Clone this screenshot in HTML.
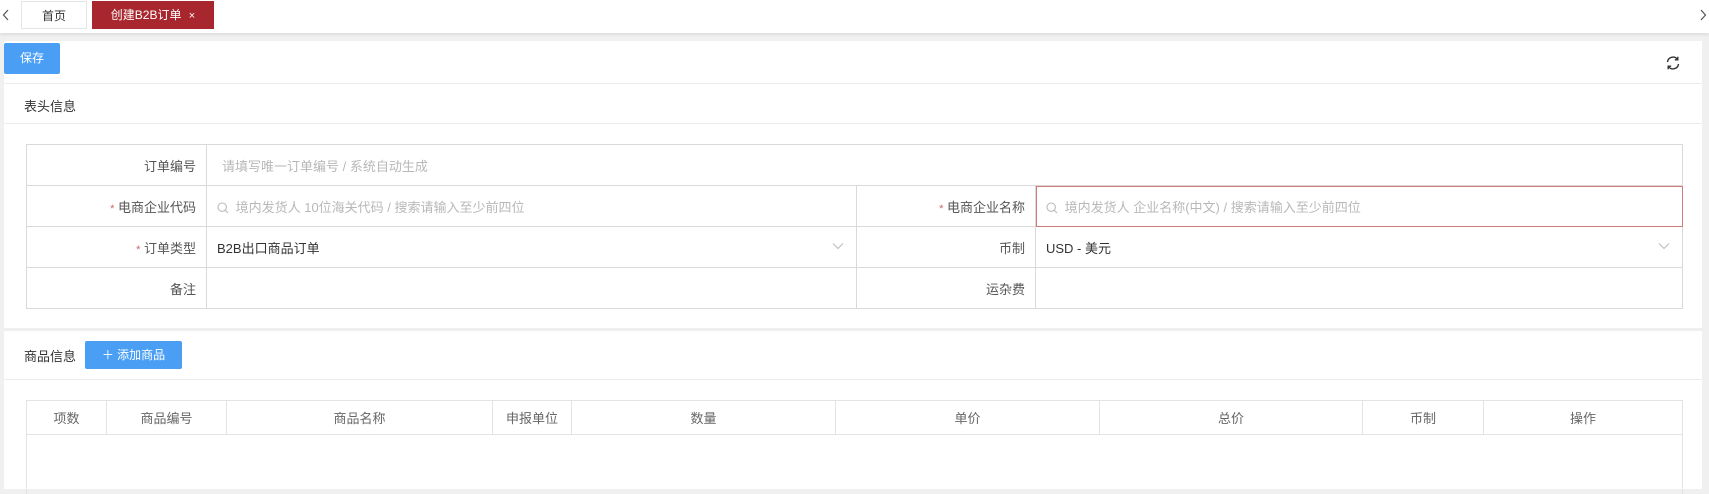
<!DOCTYPE html>
<html><head><meta charset="utf-8"><style>
*{box-sizing:border-box;margin:0;padding:0}
body{width:1709px;height:489px;overflow:hidden;background:#f0f0f0;font-family:"Liberation Sans","Noto Sans CJK SC",sans-serif;font-size:13px;color:#333;position:relative}
.abs{position:absolute}
.tabbar{left:0;top:0;width:1709px;height:33px;background:#fff;box-shadow:0 2px 3px rgba(0,0,0,.08)}
.tab{top:1px;height:28px;line-height:28px;text-align:center;font-size:12px}
.panel{left:4px;top:41px;width:1698px;height:448px;background:#fff}
.hl{position:absolute;left:4px;width:1698px;height:1px;background:#ececec}
table{border-collapse:collapse;position:absolute}
td{border:1px solid #d9d9d9;height:41px;padding:0 10px;position:relative}
td.l{text-align:right;color:#555}
.ph{color:#b8b8b8}
.star{color:#c66;font-size:11px}
.g td{height:34px;text-align:center;color:#666;background:#fff;border-color:#e3e3e3}
.chev{position:absolute;right:12px;top:15px}
.srch{vertical-align:-2px;margin-right:3px}
</style></head><body>
<div class="abs tabbar"></div>
<svg class="abs" style="left:2px;top:9px" width="8" height="12" viewBox="0 0 8 12" fill="none" stroke="#555" stroke-width="1.2"><path d="M6 1L1.5 6L6 11"/></svg>
<svg class="abs" style="left:1699px;top:9px" width="8" height="12" viewBox="0 0 8 12" fill="none" stroke="#555" stroke-width="1.2"><path d="M2 1L6.5 6L2 11"/></svg>
<div class="abs tab" style="left:21px;width:66px;border:1px solid #e5e5e5;color:#333">首页</div>
<div class="abs tab" style="left:92px;width:122px;background:#a8272e;color:#fff">创建B2B订单 <span style="font-size:11px;margin-left:4px">×</span></div>
<div class="abs panel"></div>
<div class="abs" style="left:4px;top:43px;width:56px;height:31px;background:#4a9ff5;color:#fff;font-size:12px;line-height:31px;text-align:center;border-radius:2px">保存</div>
<svg class="abs" style="left:1665px;top:55px" width="16" height="16" viewBox="0 0 16 16" fill="none" stroke="#333" stroke-width="1.4"><path d="M2.5 7A5.5 5.5 0 0 1 12.5 4.5"/><path d="M13.5 9A5.5 5.5 0 0 1 3.5 11.5"/><path d="M12.8 1.8v3h-3" /><path d="M3.2 14.2v-3h3"/></svg>
<div class="hl" style="top:83px"></div>
<div class="abs" style="left:24px;top:96px">表头信息</div>
<div class="hl" style="top:123px"></div>
<table style="left:26px;top:144px;width:1657px">
<tr><td class="l" style="width:180px">订单编号</td><td colspan="3" class="ph" style="padding-left:15px">请填写唯一订单编号 / 系统自动生成</td></tr>
<tr><td class="l"><span class="star">*</span> 电商企业代码</td><td class="ph" style="width:650px"><svg class="srch" width="12" height="12" viewBox="0 0 12 12" fill="none" stroke="#bbb" stroke-width="1.1"><circle cx="5.2" cy="5.2" r="4.2"/><path d="M8.3 8.3L11 11"/></svg> 境内发货人 10位海关代码 / 搜索请输入至少前四位</td><td class="l" style="width:179px"><span class="star">*</span> 电商企业名称</td><td class="ph" style="outline:1px solid #d37b7b;outline-offset:-1px"><svg class="srch" width="12" height="12" viewBox="0 0 12 12" fill="none" stroke="#bbb" stroke-width="1.1"><circle cx="5.2" cy="5.2" r="4.2"/><path d="M8.3 8.3L11 11"/></svg> 境内发货人 企业名称(中文) / 搜索请输入至少前四位</td></tr>
<tr><td class="l"><span class="star">*</span> 订单类型</td><td>B2B出口商品订单<svg class="chev" width="12" height="8" viewBox="0 0 12 8" fill="none" stroke="#bbb" stroke-width="1"><path d="M1 1.5L6 6.5L11 1.5"/></svg></td><td class="l">币制</td><td>USD - 美元<svg class="chev" width="12" height="8" viewBox="0 0 12 8" fill="none" stroke="#bbb" stroke-width="1"><path d="M1 1.5L6 6.5L11 1.5"/></svg></td></tr>
<tr><td class="l">备注</td><td></td><td class="l">运杂费</td><td></td></tr>
</table>
<div class="abs" style="left:4px;top:328px;width:1698px;height:3px;background:#efefef"></div>
<div class="abs" style="left:24px;top:346px">商品信息</div>
<div class="abs" style="left:85px;top:341px;width:97px;height:28px;background:#4a9ff5;color:#fff;font-size:12px;line-height:28px;text-align:center;border-radius:2px">＋ 添加商品</div>
<div class="hl" style="top:379px"></div>
<table class="g" style="left:26px;top:400px;width:1657px">
<tr><td style="width:80px">项数</td><td style="width:120px">商品编号</td><td style="width:266px">商品名称</td><td style="width:79px">申报单位</td><td style="width:264px">数量</td><td style="width:264px">单价</td><td style="width:263px">总价</td><td style="width:121px">币制</td><td>操作</td></tr>
</table>
<div class="abs" style="left:26px;top:434px;width:1657px;height:60px;border-left:1px solid #e3e3e3;border-right:1px solid #e3e3e3"></div>
</body></html>
